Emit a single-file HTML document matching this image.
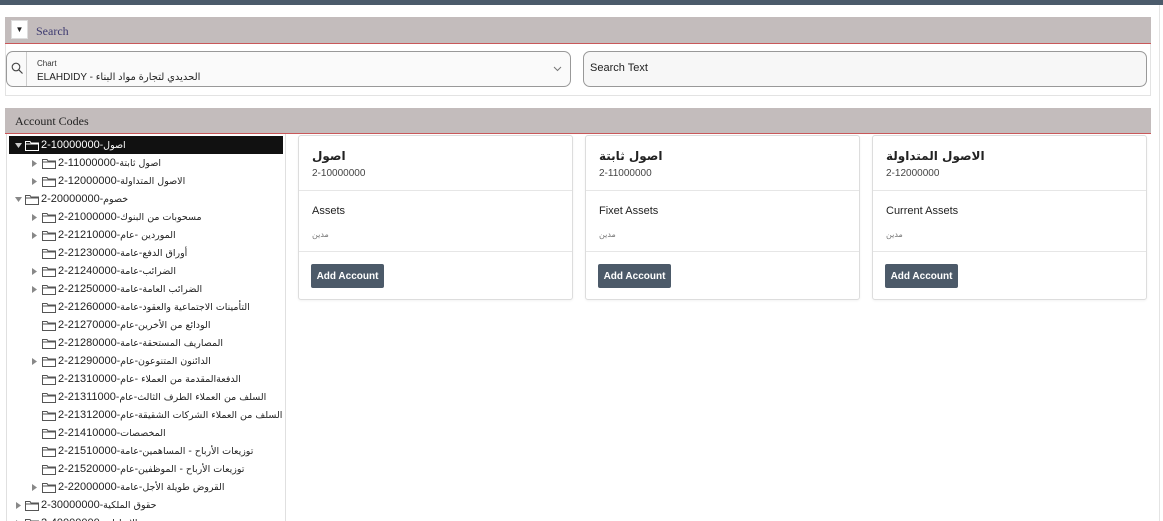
<!DOCTYPE html>
<html><head><meta charset="utf-8"><style>
*{box-sizing:border-box;margin:0;padding:0}
html,body{width:1163px;height:521px;overflow:hidden}
body{background:#fff;position:relative;font-family:"Liberation Sans","DejaVu Sans",sans-serif;font-size:11px;color:#222}
.abs{position:absolute}
.hdr{background:#c3bcbc;border-bottom:1px solid #c9585a;font-family:"Liberation Serif",serif;font-size:12px}
.tree .r{position:absolute;height:18px;line-height:18px;white-space:nowrap;font-size:11px;color:#222;direction:ltr}
.tree svg{position:absolute}
.card{position:absolute;top:135px;width:275px;height:165px;border:1px solid #ddd;border-radius:3px;background:#fff;box-shadow:0 1px 2px rgba(0,0,0,.05)}
.card .t{position:absolute;left:13px;top:13px;font-size:12px;font-weight:bold;font-family:"DejaVu Sans",sans-serif;color:#222}
.card .c{position:absolute;left:13px;top:32px;font-size:10px;color:#444}
.card .l1{position:absolute;left:0;right:0;top:54px;border-top:1px solid #e6e6e6}
.card .n{position:absolute;left:13px;top:69px;font-size:11px;color:#222}
.card .d{position:absolute;left:13px;top:94px;font-size:8px;color:#777;font-family:"DejaVu Sans",sans-serif}
.card .l2{position:absolute;left:0;right:0;top:115px;border-top:1px solid #e6e6e6}
.card .b{position:absolute;left:12px;top:128px;width:73px;height:24px;background:#4c5a69;border-radius:2px;color:#fff;font-weight:bold;font-size:10px;line-height:25px;text-align:center}
</style></head><body>
<div class="abs" style="left:0;top:0;width:1163px;height:5px;background:#4b5b6b"></div>
<div class="abs" style="left:1159px;top:5px;width:1px;height:516px;background:#e4e4e4"></div>
<div class="abs" style="left:5px;top:17px;width:1146px;height:79px;border:1px solid #e3e3e3"></div>
<div class="abs hdr" style="left:5px;top:17px;width:1146px;height:27px"></div>
<div class="abs" style="left:11px;top:20px;width:17px;height:19px;background:#fff;border:1px solid #ddd;font-size:8px;text-align:center;line-height:18px">▼</div>
<div class="abs" style="left:36px;top:24px;font-family:'Liberation Serif',serif;font-size:12px;color:#3d3a70">Search</div>
<div class="abs" style="left:6px;top:51px;width:565px;height:36px;border:1px solid #999;border-radius:7px;background:#fafafa"></div>
<div class="abs" style="left:26px;top:52px;width:1px;height:34px;background:#ccc"></div>
<svg class="abs" style="left:11px;top:62px" width="13" height="13" viewBox="0 0 13 13"><circle cx="5" cy="5" r="3.8" fill="none" stroke="#444" stroke-width="1.1"/><line x1="7.8" y1="7.8" x2="11.5" y2="11.5" stroke="#444" stroke-width="1.2"/></svg>
<div class="abs" style="left:37px;top:59px;font-size:8px;color:#333">Chart</div>
<div class="abs" style="left:37px;top:72px;font-size:10px;color:#222">ELAHDIDY - الحديدي لتجارة مواد البناء</div>
<svg class="abs" style="left:553px;top:66px" width="9" height="6" viewBox="0 0 9 6"><polyline points="1,1 4.5,4.5 8,1" fill="none" stroke="#777" stroke-width="1"/></svg>
<div class="abs" style="left:583px;top:51px;width:564px;height:36px;border:1px solid #999;border-radius:7px;background:#f7f7f7"></div>
<div class="abs" style="left:590px;top:62px;font-size:11px;color:#222">Search Text</div>
<div class="abs hdr" style="left:5px;top:108px;width:1146px;height:26px"></div>
<div class="abs" style="left:15px;top:114px;font-family:'Liberation Serif',serif;font-size:12px;color:#222">Account Codes</div>
<div class="abs" style="left:6px;top:134px;width:280px;height:400px;border:1px solid #e0e0e0;border-top:none"></div>
<div class="abs" style="left:9px;top:136px;width:274px;height:18px;background:#111"></div>
<div class="tree" id="tree"></div>
<div class="card" style="left:298px"><div class="t">اصول</div><div class="c">2-10000000</div><div class="l1"></div><div class="n">Assets</div><div class="d">مدين</div><div class="l2"></div><div class="b">Add Account</div></div>
<div class="card" style="left:585px"><div class="t">اصول ثابتة</div><div class="c">2-11000000</div><div class="l1"></div><div class="n">Fixet Assets</div><div class="d">مدين</div><div class="l2"></div><div class="b">Add Account</div></div>
<div class="card" style="left:872px"><div class="t">الاصول المتداولة</div><div class="c">2-12000000</div><div class="l1"></div><div class="n">Current Assets</div><div class="d">مدين</div><div class="l2"></div><div class="b">Add Account</div></div>
<script>
var rows=[
[0,'d','2-10000000','اصول',1],
[1,'r','2-11000000','اصول ثابتة'],
[1,'r','2-12000000','الاصول المتداولة'],
[0,'d','2-20000000','خصوم'],
[1,'r','2-21000000','مسحوبات من البنوك'],
[1,'r','2-21210000','الموردين -عام'],
[1,'','2-21230000','أوراق الدفع-عامة'],
[1,'r','2-21240000','الضرائب-عامة'],
[1,'r','2-21250000','الضرائب العامة-عامة'],
[1,'','2-21260000','التأمينات الاجتماعية والعقود-عامة'],
[1,'','2-21270000','الودائع من الأخرين-عام'],
[1,'','2-21280000','المصاريف المستحقة-عامة'],
[1,'r','2-21290000','الدائنون المتنوعون-عام'],
[1,'','2-21310000','الدفعةالمقدمة من العملاء -عام'],
[1,'','2-21311000','السلف من العملاء الطرف الثالث-عام'],
[1,'','2-21312000','السلف من العملاء الشركات الشقيقة-عام'],
[1,'','2-21410000','المخصصات'],
[1,'','2-21510000','توزيعات الأرباح - المساهمين-عامة'],
[1,'','2-21520000','توزيعات الأرباح - الموظفين-عام'],
[1,'r','2-22000000','القروض طويلة الأجل-عامة'],
[0,'r','2-30000000','حقوق الملكية'],
[0,'r','2-40000000','الايرادات']];
var h='';
rows.forEach(function(r,i){
 var y=136+i*18, ax=r[0]?31:15, fx=r[0]?42:25, tx=fx+16, col=r[4]?'#fff':'#222', ic=r[4]?'#fff':'#555';
 if(r[1]=='d')h+='<svg style="left:'+ax+'px;top:'+(y+7)+'px" width="7" height="5"><polygon points="0,0 7,0 3.5,5" fill="'+(r[4]?'#ccc':'#888')+'"/></svg>';
 if(r[1]=='r')h+='<svg style="left:'+(ax+1)+'px;top:'+(y+6)+'px" width="5" height="7"><polygon points="0,0 5,3.5 0,7" fill="#888"/></svg>';
 h+='<svg style="left:'+fx+'px;top:'+(y+4)+'px" width="15" height="11"><path d="M0.5 1.5 H5 L6 3 H13.5 V10.5 H0.5 Z M0.5 4 H13.5" fill="none" stroke="'+ic+'" stroke-width="1"/></svg>';
 h+='<div class="r" style="left:'+tx+'px;top:'+y+'px;color:'+col+'"><span style="font-size:11px">'+r[2]+'</span><span style="font-family:\'DejaVu Sans\',sans-serif;font-size:9.5px">-'+r[3]+'</span></div>';
});
document.getElementById('tree').innerHTML=h;
</script>
</body></html>
